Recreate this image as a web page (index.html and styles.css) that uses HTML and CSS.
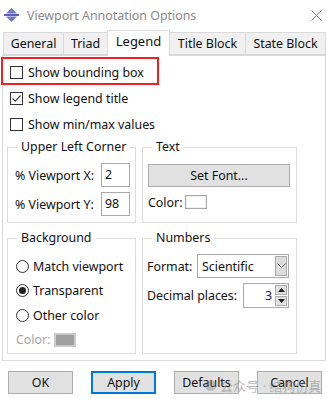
FILE: index.html
```html
<!DOCTYPE html>
<html>
	<head>
		<meta charset="utf-8">
		<title>Viewport Annotation Options</title>
		<link rel="stylesheet" href="styles.css">
	</head>
	<body>
		<div class="dialog">
			<div class="titlebar">
				<svg class="app-icon" width="15" height="14" viewBox="0 0 15 14">
					<polygon points="7.5,0 13,5.5 2,5.5" fill="#7079c8"/>
					<rect x="0" y="6" width="15" height="2" fill="#5a62b8"/>
					<polygon points="2,8.5 13,8.5 7.5,14" fill="#7079c8"/>
				</svg>
				<span class="title">Viewport Annotation Options</span>
				<svg class="close" width="11" height="11" viewBox="0 0 11 11">
					<path d="M0.5 0.5 L10.5 10.5 M10.5 0.5 L0.5 10.5" stroke="#777" stroke-width="1" fill="none"/>
				</svg>
			</div>

			<div class="tabs">
				<div class="tab t-general">General</div>
				<div class="tab t-triad">Triad</div>
				<div class="tab t-legend active">Legend</div>
				<div class="tab t-title">Title Block</div>
				<div class="tab t-state">State Block</div>
			</div>

			<div class="panel">
				<div class="checks">
					<div class="row"><span class="checkbox"></span>Show bounding box</div>
					<div class="row"><span class="checkbox checked">
						<svg width="11" height="11" viewBox="0 0 11 11"><path d="M1.5 5.5 L4.2 8.2 L9.5 2.5" stroke="#444" stroke-width="1.2" fill="none"/></svg>
					</span>Show legend title</div>
					<div class="row"><span class="checkbox"></span>Show min/max values</div>
				</div>

				<div class="groups">
					<div class="group corner">
						<span class="group-title">Upper Left Corner</span>
						<div class="field"><span class="label">% Viewport X:</span><span class="input small">2</span></div>
						<div class="field"><span class="label">% Viewport Y:</span><span class="input small">98</span></div>
					</div>
					<div class="group text">
						<span class="group-title">Text</span>
						<div class="button wide">Set Font...</div>
						<div class="field color"><span class="label">Color:</span><span class="swatch white"></span></div>
					</div>
				</div>

				<div class="groups">
					<div class="group corner bg">
						<span class="group-title">Background</span>
						<div class="radio-row"><span class="radio"></span>Match viewport</div>
						<div class="radio-row"><span class="radio on"></span>Transparent</div>
						<div class="radio-row"><span class="radio"></span>Other color</div>
						<div class="radio-row disabled">Color:<span class="swatch gray"></span></div>
					</div>
					<div class="group text numbers">
						<span class="group-title">Numbers</span>
						<div class="field"><span class="label">Format:</span>
							<div class="select">
								<span>Scientific</span>
								<span class="drop">
									<svg width="9" height="6" viewBox="0 0 9 6"><path d="M0.5 0.5 L4.5 4.5 L8.5 0.5" stroke="#666" fill="none"/></svg>
								</span>
							</div>
						</div>
						<div class="field"><span class="label">Decimal places:</span>
							<div class="spin">
								<span class="spin-val">3</span>
								<span class="spin-btns">
									<span class="spin-btn"><svg width="7" height="4" viewBox="0 0 7 4"><polygon points="3.5,0 7,4 0,4" fill="#222"/></svg></span>
									<span class="spin-btn"><svg width="7" height="4" viewBox="0 0 7 4"><polygon points="0,0 7,0 3.5,4" fill="#222"/></svg></span>
								</span>
							</div>
						</div>
					</div>
				</div>
			</div>

			<div class="buttons">
				<div class="button">OK</div>
				<div class="button default">Apply</div>
				<div class="button">Defaults</div>
				<div class="button">Cancel</div>
			</div>

			<div class="highlight"></div>
			<div class="watermark"><span class="wm-dot"></span>公众号 · 结构仿真</div>
		</div>
	</body>
</html>
```

FILE: styles.css
```css
html,
body {
	margin: 0;
	padding: 0;
	background: #fff;
}

body {
	font-family: "Noto Sans", "Noto Sans CJK SC", sans-serif;
	font-size: 12.4px;
	color: #111;
	white-space: nowrap;
}

.dialog {
	position: relative;
	width: 327px;
	height: 399px;
	overflow: hidden;
	background: #fff;
}

.titlebar {
	height: 30px;
	display: flex;
	align-items: center;
	padding-left: 4px;
}

.app-icon {
	margin-right: 8px;
}

.title {
	color: #8a8a8a;
	font-size: 12.4px;
	flex: 1;
}

.close {
	margin-right: 5px;
}

.tabs {
	height: 25px;
	display: flex;
	align-items: flex-end;
	padding-left: 3px;
	position: relative;
	z-index: 1;
}

.tab {
	height: 23px;
	line-height: 22px;
	text-align: center;
	background: #f0f0f0;
	border: 1px solid #d9d9d9;
	border-left: none;
	box-sizing: border-box;
}

.t-general {
	width: 61px;
	border-left: 1px solid #d9d9d9;
}

.t-triad {
	width: 44px;
}

.t-legend {
	width: 63px;
}

.t-title {
	width: 76px;
}

.t-state {
	width: 80px;
}

.tab.active {
	height: 26px;
	line-height: 20px;
	background: #fff;
	border-bottom: none;
	margin-bottom: -1px;
	margin-left: -1px;
	border-left: 1px solid #d9d9d9;
	font-size: 13px;
}

.panel {
	margin: 0 1px 0 2px;
	border: 1px solid #d9d9d9;
	height: 306px;
	padding: 3px 0 0 4px;
	box-sizing: border-box;
}

.row {
	height: 26px;
	display: flex;
	align-items: center;
	padding-left: 3px;
}

.checkbox {
	width: 13px;
	height: 13px;
	border: 1px solid #333;
	box-sizing: border-box;
	margin-right: 5px;
	display: flex;
	align-items: center;
	justify-content: center;
}

.groups {
	display: flex;
	gap: 6px;
	margin-top: 10px;
}

.groups + .groups {
	margin-top: 15px;
}

.group {
	position: relative;
	border: 1px solid #dcdcdc;
	box-sizing: border-box;
	padding: 15px 5px 5px 7px;
}

.group-title {
	position: absolute;
	top: -10px;
	left: 9px;
	background: #fff;
	padding: 0 4px;
}

.corner {
	width: 129px;
	height: 76px;
}

.text {
	width: 155px;
	height: 76px;
	padding: 16px 7px 5px 4px;
}

.bg,
.numbers {
	height: 116px;
}

.field {
	display: flex;
	align-items: center;
	height: 24px;
	gap: 3px;
}

.field + .field {
	margin-top: 5px;
}

.label {
	flex-shrink: 0;
}

.input {
	height: 24px;
	border: 1px solid #a8a8a8;
	box-sizing: border-box;
	line-height: 22px;
	padding: 0 3px;
	margin-left: auto;
}

.small {
	width: 29px;
}

.button {
	height: 23px;
	line-height: 21px;
	text-align: center;
	background: #e1e1e1;
	border: 1px solid #adadad;
	box-sizing: border-box;
}

.wide {
	width: 142px;
	margin-left: 1px;
}

.text .color {
	margin-top: 3px;
	padding-left: 1px;
}

.swatch {
	width: 22px;
	height: 14px;
	border: 1px solid #a8a8a8;
	box-sizing: border-box;
}

.swatch.white {
	background: #fff;
	box-shadow: inset 0 0 0 1px #f0f0f0;
}

.swatch.gray {
	background: #a0a0a0;
	border: 2px solid #ccc;
	margin-left: 4px;
}

.radio-row {
	height: 24.5px;
	display: flex;
	align-items: center;
	padding-left: 1px;
}

.radio {
	width: 13px;
	height: 13px;
	border: 1px solid #333;
	border-radius: 50%;
	box-sizing: border-box;
	margin-right: 4px;
	display: flex;
	align-items: center;
	justify-content: center;
}

.radio.on::after {
	content: "";
	width: 7px;
	height: 7px;
	border-radius: 50%;
	background: #222;
}

.disabled {
	color: #a8a8a8;
}

.numbers {
	padding-top: 15px;
}

.select {
	width: 92px;
	height: 24px;
	border: 1px solid #a8a8a8;
	box-sizing: border-box;
	display: flex;
	align-items: center;
	padding: 0 1px 0 4px;
	margin-left: auto;
}

.select span:first-child {
	flex: 1;
}

.drop {
	width: 12px;
	height: 20px;
	background: #dcdcdc;
	border: 1px solid #aaa;
	box-sizing: border-box;
	display: flex;
	align-items: center;
	justify-content: center;
}

.spin {
	width: 46px;
	height: 25px;
	border: 1px solid #a8a8a8;
	box-sizing: border-box;
	display: flex;
	align-items: center;
	padding: 0 1px;
	margin-left: auto;
}

.spin-val {
	flex: 1;
	text-align: right;
	padding-right: 3px;
	color: #1a1a60;
}

.spin-btns {
	display: flex;
	flex-direction: column;
	gap: 1px;
}

.spin-btn {
	width: 12px;
	height: 10px;
	background: #e1e1e1;
	border: 1px solid #adadad;
	box-sizing: border-box;
	display: flex;
	align-items: center;
	justify-content: center;
}

.buttons {
	display: flex;
	gap: 18px;
	padding: 10px 0 0 8px;
}

.buttons .button {
	width: 65px;
}

.buttons .default {
	border: 2px solid #0078d7;
	line-height: 19px;
}

.highlight {
	position: absolute;
	left: 1px;
	top: 57px;
	width: 158px;
	height: 28px;
	border: 2px solid #f0201e;
	box-sizing: border-box;
}

.watermark {
	position: absolute;
	left: 205px;
	top: 376px;
	color: rgba(120, 120, 120, 0.5);
	font-size: 13px;
	display: flex;
	align-items: center;
	gap: 4px;
}

.wm-dot {
	width: 11px;
	height: 11px;
	border-radius: 50%;
	background: rgba(120, 120, 120, 0.35);
}
```
